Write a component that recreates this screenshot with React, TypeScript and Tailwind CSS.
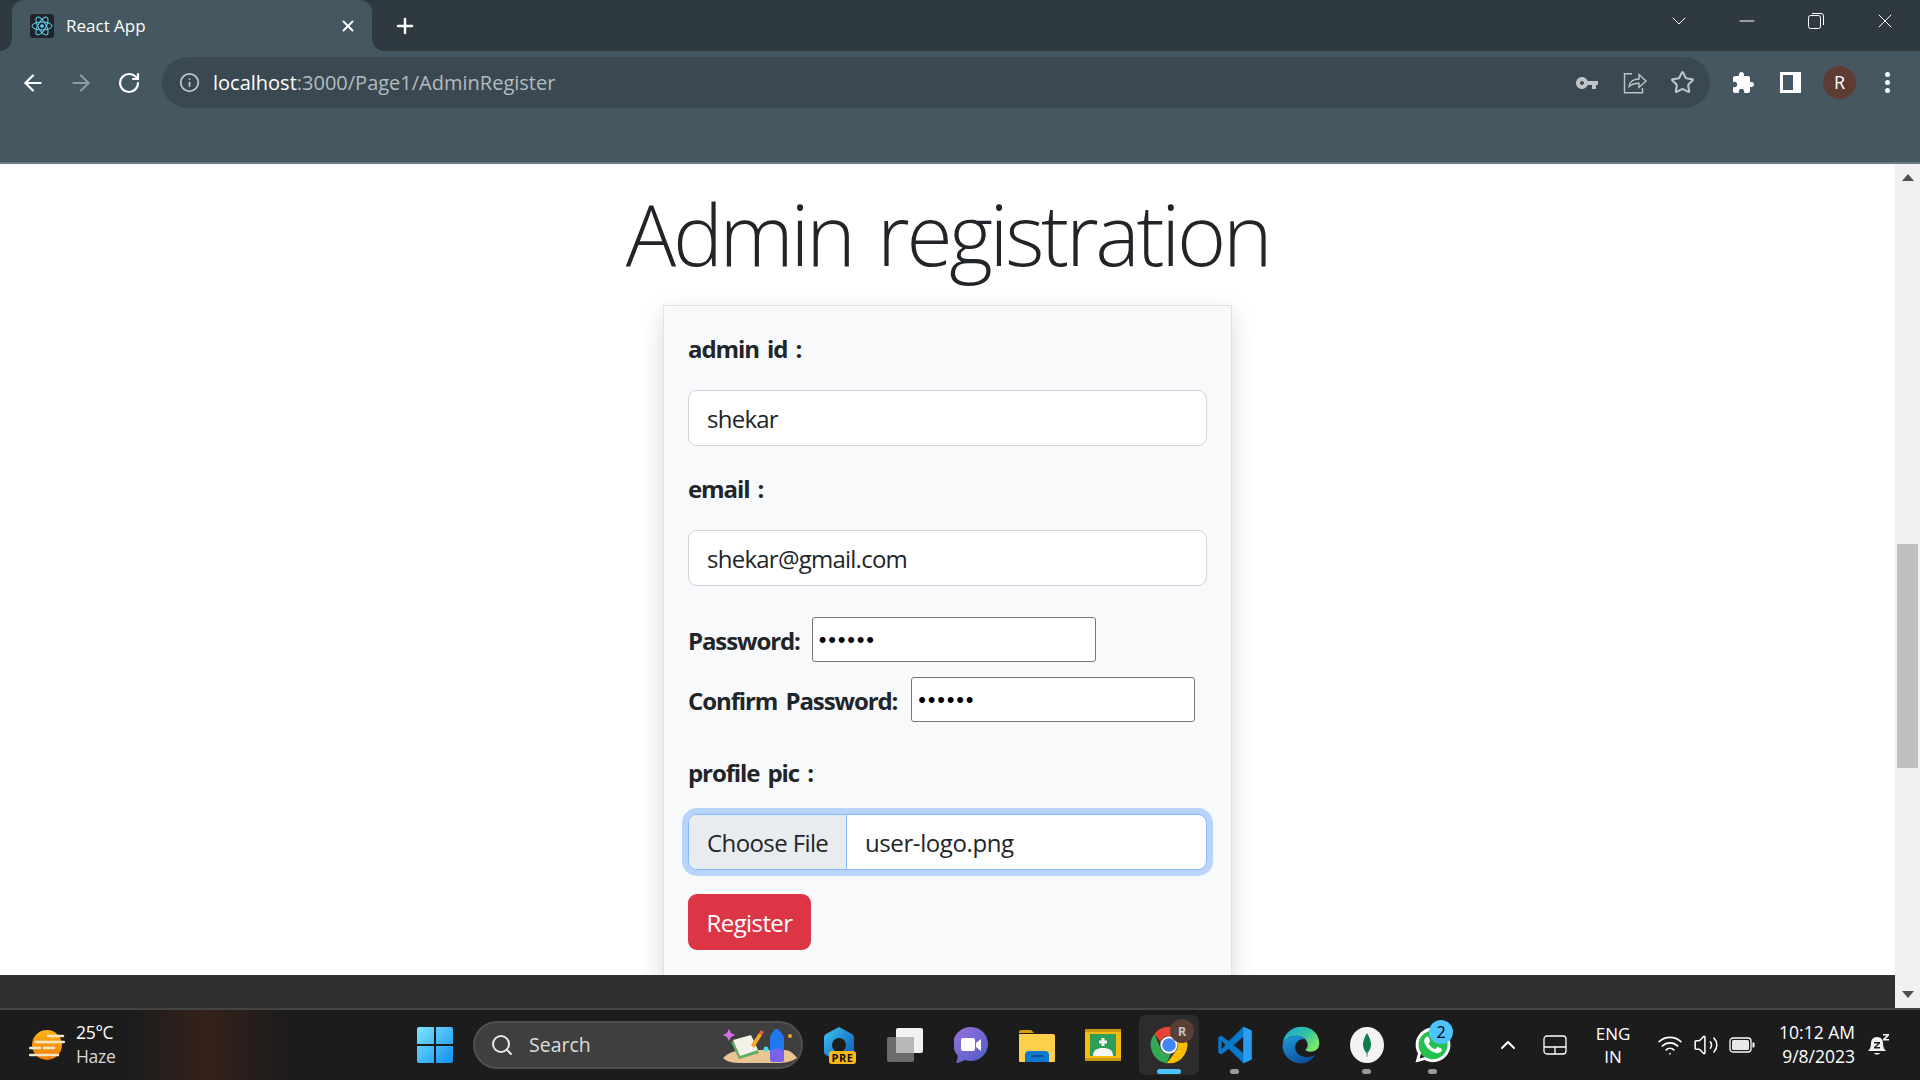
import React from "react";
import { ArrowLeft, ArrowRight, ChevronDown, ChevronUp, Info, Minus, Plus, RotateCw, Search, Star, Volume2, Wifi, X } from "lucide-react";
import { FaWhatsapp } from "react-icons/fa";

const ReactLogo = () => (
  <svg viewBox="0 0 24 24" className="w-6 h-6 rounded-[3px] bg-[#20232a]" fill="none" stroke="#61dafb" strokeWidth="1">
    <circle cx="12" cy="12" r="1.8" fill="#61dafb" stroke="none" />
    <ellipse cx="12" cy="12" rx="10" ry="4" />
    <ellipse cx="12" cy="12" rx="10" ry="4" transform="rotate(60 12 12)" />
    <ellipse cx="12" cy="12" rx="10" ry="4" transform="rotate(120 12 12)" />
  </svg>
);

const Tabs = () => (
  <div className="h-[51px] flex items-end bg-[#2e3a40] text-white">
    <div className="relative ml-3 w-[360px] h-[51px] rounded-t-[12px] bg-[#455761] flex items-center pl-[18px] pr-[15px]">
      <span className="absolute bottom-0 -left-3 w-3 h-3 bg-[radial-gradient(circle_at_0_0,transparent_11.5px,#455761_12px)]" />
      <span className="absolute bottom-0 -right-3 w-3 h-3 bg-[radial-gradient(circle_at_100%_0,transparent_11.5px,#455761_12px)]" />
      <ReactLogo />
      <span className="ml-3 text-[17px] flex-1">React App</span>
      <X size={18} strokeWidth={2.5} />
    </div>
    <div className="ml-[21px] h-[51px] flex items-center">
      <Plus size={24} strokeWidth={2.5} />
    </div>
    <div className="ml-auto h-[42px] self-start flex items-center">
      <ChevronDown size={24} strokeWidth={1} className="mr-[44px]" />
      <Minus size={24} strokeWidth={1} className="mr-[49px]" />
      <svg viewBox="0 0 16 16" className="w-4 h-4 mr-[49px]" fill="none" stroke="white" strokeWidth="1">
        <rect x="0.5" y="2.5" width="12" height="13" rx="2" />
        <path d="M4 0.5h9a2.5 2.5 0 0 1 2.5 2.5v9" />
      </svg>
      <X size={24} strokeWidth={1} className="mr-[23px]" />
    </div>
  </div>
);

const Toolbar = () => (
  <div className="h-[113px] bg-[#455761] border-b-2 border-[#6d7b84] flex items-start pt-[6px] text-white">
    <div className="w-[162px] h-[51px] flex items-center">
      <ArrowLeft size={26} strokeWidth={2} className="ml-5" />
      <ArrowRight size={26} strokeWidth={2} className="ml-[22px] text-[#8f9aa0]" />
      <RotateCw size={24} strokeWidth={2.2} className="ml-[23px]" />
    </div>
    <div className="w-[1548px] h-[51px] rounded-full bg-[#3a4851] flex items-center">
      <Info size={21} className="ml-[17px] text-[#c3c8cb]" />
      <span className="ml-[13px] text-[20px] text-[#b4bbbf]">
        <span className="text-white">localhost</span>:3000/Page1/AdminRegister
      </span>
      <svg viewBox="0 0 24 24" className="ml-auto w-6 h-6" fill="#c0c4c6">
        <path d="M12.65 10C11.83 7.67 9.61 6 7 6c-3.31 0-6 2.69-6 6s2.69 6 6 6c2.61 0 4.83-1.67 5.65-4H17v4h4v-4h2v-4H12.65zM7 14c-1.1 0-2-.9-2-2s.9-2 2-2 2 .9 2 2-.9 2-2 2z" />
      </svg>
      <svg viewBox="0 0 24 24" className="ml-6 w-6 h-6" fill="none" stroke="#c0c4c6" strokeWidth="1.4">
        <path d="M9 2.8H1.5v19h18V17" />
        <path d="M6 15.5c.5-5 5-7.5 10-7.5V3.5l7 6.5-7 6.5v-4.3c-4.5 0-7.5 1-10 3.3z" />
      </svg>
      <Star size={25} strokeWidth={2} className="ml-[23px] text-[#c0c4c6]" />
      <span className="w-[15px]" />
    </div>
    <div className="h-[51px] flex items-center">
      <svg viewBox="0 0 24 24" className="ml-[21px] w-6 h-6" fill="white">
        <path d="M20.5 11H19V7c0-1.1-.9-2-2-2h-4V3.5C13 2.12 11.88 1 10.5 1S8 2.12 8 3.5V5H4c-1.1 0-1.99.9-1.99 2v3.8H3.5c1.49 0 2.7 1.21 2.7 2.7s-1.21 2.7-2.7 2.7H2V20c0 1.1.9 2 2 2h3.8v-1.5c0-1.49 1.21-2.7 2.7-2.7 1.49 0 2.7 1.21 2.7 2.7V22H17c1.1 0 2-.9 2-2v-4h1.5c1.38 0 2.5-1.12 2.5-2.5S21.88 11 20.5 11z" />
      </svg>
      <div className="ml-[25px] w-[21px] h-[21px] bg-white flex items-center pl-[3px]">
        <div className="w-[10px] h-[15px] bg-[#455761]" />
      </div>
      <div className="ml-[22px] w-[33px] h-[33px] rounded-full bg-[#5e3c33] flex items-center justify-center text-[18px]">R</div>
      <div className="ml-[29px] flex flex-col gap-[3px]">
        <div className="w-[5px] h-[5px] rounded-full bg-white" />
        <div className="w-[5px] h-[5px] rounded-full bg-white" />
        <div className="w-[5px] h-[5px] rounded-full bg-white" />
      </div>
    </div>
  </div>
);

const labelText = "font-bold text-[24px] tracking-[-1.1px] [word-spacing:3px]";

const Field = ({ label, value }: { label: string; value: string }) => (
  <div>
    <label className={"block h-9 leading-[34px] " + labelText}>{label}</label>
    <input
      readOnly
      value={value}
      className="mt-[22px] mb-[26px] block w-full h-[56px] rounded-[9px] border border-[#ced4da] bg-white px-[18px] text-[24px] tracking-[-0.75px] text-[#212529]"
    />
  </div>
);

const PasswordRow = ({ label, className, gap }: { label: string; className: string; gap: string }) => (
  <div className={"flex items-center " + className}>
    <label className={"leading-9 pt-[2px] " + labelText}>{label}</label>
    <input
      readOnly
      type="password"
      value="shekar"
      className={gap + " w-[284px] h-[45px] rounded-[3px] border border-[#767676] bg-white px-[6px] text-[22px] tracking-[1.8px] text-black font-['Liberation_Sans',sans-serif]"}
    />
  </div>
);

const RegisterForm = () => (
  <div className="mx-auto w-[569px] border border-[#dee2e6] bg-[#f8f9fa] px-6 pt-[26px] pb-10 shadow-[0_8px_24px_rgba(0,0,0,0.15)] text-[#212529]">
    <Field label="admin id :" value="shekar" />
    <Field label="email :" value="shekar@gmail.com" />
    <PasswordRow label="Password:" className="mt-[31px]" gap="ml-3" />
    <PasswordRow label="Confirm Password:" className="mt-[15px]" gap="ml-[14px]" />
    <label className={"block mt-[34px] h-9 leading-[34px] " + labelText}>profile pic :</label>
    <div className="mt-[22px] h-[56px] rounded-[9px] border border-[#86b7fe] bg-white flex items-center overflow-visible shadow-[0_0_0_6px_#b9d4fb] text-[24px] tracking-[-0.6px]">
      <div className="w-[158px] h-full rounded-l-[8px] bg-[#e9ecef] border-r border-[#86b7fe] flex items-center pl-[18px] pt-[2px]">Choose File</div>
      <span className="ml-[18px] pt-[2px] tracking-[-0.4px]">user-logo.png</span>
    </div>
    <button className="block mt-6 w-[123px] h-[56px] rounded-[9px] bg-[#dc3545] pt-[2px] text-white text-[24px] tracking-[-0.6px]">Register</button>
  </div>
);

const Page = () => (
  <div className="w-[1895px]">
    <div className="h-[811px] bg-white overflow-hidden">
      <h1 className="mt-[19px] mb-[21px] h-[101px] text-center text-[84px] leading-[101px] font-light tracking-[-3.3px] [word-spacing:6px] text-[#212529]">
        Admin registration
      </h1>
      <RegisterForm />
    </div>
    <div className="h-[33px] bg-[#303030]" />
  </div>
);

const Scrollbar = () => (
  <div className="w-[25px] h-[844px] bg-[#f1f1f1] flex flex-col items-center">
    <svg viewBox="0 0 12 7" className="w-3 h-[7px] mt-[10px] shrink-0" fill="#505050"><path d="M6 0l6 7H0z" /></svg>
    <div className="mt-[363px] w-[21px] h-[224px] bg-[#bfbfbf]" />
    <svg viewBox="0 0 12 7" className="w-3 h-[7px] mt-auto mb-[10px] shrink-0" fill="#505050"><path d="M6 7L0 0h12z" /></svg>
  </div>
);

const Weather = () => (
  <svg viewBox="0 0 36 30" className="w-9 h-[30px]">
    <defs>
      <linearGradient id="sun" x1="0" y1="0" x2="0" y2="1">
        <stop offset="0" stopColor="#fcb415" />
        <stop offset="1" stopColor="#f07b0c" />
      </linearGradient>
    </defs>
    <ellipse cx="18" cy="15" rx="15" ry="15" fill="url(#sun)" />
    <g stroke="#f6e6c4" strokeWidth="2.5" strokeLinecap="round">
      <path d="M19 6h15M7 12h28M1 18h10M15 18h10M1 25h28" />
    </g>
  </svg>
);

const WinLogo = () => (
  <svg viewBox="0 0 36 36" className="w-9 h-9">
    <defs>
      <linearGradient id="win" x1="0" y1="0" x2="1" y2="1">
        <stop offset="0" stopColor="#7fe6ff" />
        <stop offset="1" stopColor="#0f8ff0" />
      </linearGradient>
    </defs>
    <path fill="url(#win)" d="M0 2a2 2 0 0 1 2-2h15v17H0zM19 0h15a2 2 0 0 1 2 2v15H19zM0 19h17v17H2a2 2 0 0 1-2-2zM19 19h17v15a2 2 0 0 1-2 2H19z" />
  </svg>
);

const SearchArt = () => (
  <svg viewBox="0 0 74 36" className="w-[74px] h-9">
    <path d="M0 31c6-6 14-8 22-8h40c5 0 9 4 12 8-6 4-12 5-20 5H18C10 36 4 35 0 31z" fill="#e8c592" />
    <path d="M6 0l2 4 4 2-4 2-2 4-2-4-4-2 4-2z" fill="#d76fe6" transform="translate(0 2)" />
    <path d="M8 15l20-5 8 16-20 6z" fill="#5fae5f" />
    <path d="M10 13l18-5 7 15-18 6z" fill="#f3f1e8" />
    <path d="M28 18l8-12 3 2-8 13z" fill="#f6a723" />
    <path d="M36 6l2-3 3 2-2 3z" fill="#ea5a3c" />
    <circle cx="43" cy="22" r="2.5" fill="#56d8e8" />
    <path d="M47 12c0-5 4-8 5-10h3c1 2 6 5 6 10v20c0 2-1 3-3 3H50c-2 0-3-1-3-3z" fill="#1f78f0" />
    <path d="M47 26c2-6 12-6 14 0v6c0 2-1 3-3 3H50c-2 0-3-1-3-3z" fill="#7a62ee" />
    <circle cx="67" cy="9" r="2" fill="#f0a81c" />
  </svg>
);

const PreIcon = () => (
  <div className="relative w-[34px] h-[36px]">
    <svg viewBox="0 0 34 36" className="w-[34px] h-[36px]">
      <defs>
        <linearGradient id="pre" x1="0" y1="0" x2="1" y2="1">
          <stop offset="0" stopColor="#3ec6f4" />
          <stop offset="1" stopColor="#0a4fae" />
        </linearGradient>
      </defs>
      <path fillRule="evenodd" fill="url(#pre)" d="M17 0l13 7a4 4 0 0 1 2 3.500v14a4 4 0 0 1-2 3.500l-13 7-13-7a4 4 0 0 1-2-3.500v-14a4 4 0 0 1 2-3.500zM17 11a7 7 0 1 0 0 14 7 7 0 0 0 0-14z" />
    </svg>
    <span className="absolute left-[7px] top-[24px] w-[27px] h-[13px] rounded-[3px] bg-[#fdb913] text-[#111] text-[11px] leading-[13px] font-bold text-center tracking-[0.6px]">PRE</span>
  </div>
);

const TaskView = () => (
  <svg viewBox="0 0 36 34" className="w-9 h-[34px]">
    <rect x="0" y="9" width="27" height="25" rx="2" fill="#6b6b6b" />
    <rect x="9" y="0" width="27" height="25" rx="2" fill="#f2f2f2" />
    <rect x="9" y="9" width="18" height="16" fill="#b8b8b8" />
  </svg>
);

const ChatIcon = () => (
  <svg viewBox="0 0 34 36" className="w-[34px] h-9">
    <defs>
      <linearGradient id="chat" x1="0" y1="0" x2="1" y2="1">
        <stop offset="0" stopColor="#9a72dc" />
        <stop offset="1" stopColor="#4a5cc8" />
      </linearGradient>
    </defs>
    <path fill="url(#chat)" d="M17 0a17 17 0 1 1-6 32.900c-3 1.600-6 2.800-9 3.100 1-2 1.700-5 1.700-7.500A17 17 0 0 1 17 0z" />
    <rect x="7" y="11" width="14" height="13" rx="2" fill="white" />
    <path d="M22 16l5-4v12l-5-4z" fill="white" />
  </svg>
);

const FolderIcon = () => (
  <svg viewBox="0 0 36 33" className="w-9 h-[33px]">
    <path d="M0 3a2 2 0 0 1 2-2h9c2 0 3 2 4 3h-15z" fill="#d99b08" />
    <path d="M0 5h34a2 2 0 0 1 2 2v25a1 1 0 0 1-1 1H1a1 1 0 0 1-1-1z" fill="#fdcf4d" />
    <path d="M6 33V26a4 4 0 0 1 4-4h16a4 4 0 0 1 4 4v7z" fill="#0d78cf" />
    <rect x="12" y="26" width="12" height="2" fill="#0a4f95" />
  </svg>
);

const ClassroomIcon = () => (
  <svg viewBox="0 0 36 32" className="w-9 h-8">
    <rect width="36" height="32" fill="#f5bb0f" />
    <rect y="0" width="36" height="3" fill="#c99a0c" />
    <rect x="5" y="5" width="26" height="22" fill="#2f9e5b" />
    <path d="M8 27c0-6 4-8 10-8s10 2 10 8z" fill="#f5f5f5" />
    <path d="M16.500 9h3v2.500H22v3h-2.500V17h-3v-2.500H14v-3h2.500z" fill="#f5f5f5" />
    <rect y="29" width="36" height="3" fill="#c99a0c" />
  </svg>
);

const ChromeIcon = () => (
  <svg viewBox="0 0 24 24" className="w-10 h-10">
    <path fill="#ea4335" d="M12 1a11 11 0 0 1 9.530 5.500H12a5.500 5.500 0 0 0-5.200 3.700L3.300 5.300A11 11 0 0 1 12 1z" />
    <path fill="#34a853" d="M3.300 5.300L7.200 14.700a5.500 5.500 0 0 0 6 2.600L10.600 22.900A11 11 0 0 1 3.300 5.300z" />
    <path fill="#fbbc04" d="M21.530 6.500H12a5.500 5.500 0 0 1 4.800 8.200L10.600 22.900A11 11 0 0 0 21.530 6.500z" />
    <circle cx="12" cy="12" r="5.200" fill="white" />
    <circle cx="12" cy="12" r="4.100" fill="#4285f4" />
  </svg>
);

const CodeIcon = () => (
  <svg viewBox="0 0 24 24" className="w-10 h-10">
    <path fillRule="evenodd" fill="#0a78c8" d="M17 1L8.200 9.700 3.800 6.300 2 7.300v9.400l1.800 1 4.400-3.400L17 23l5-2.300V3.300zM17 7.200L11.200 12l5.800 4.800zM4 9.500L6.300 12 4 14.500z" />
    <path fill="#2a9df0" d="M17 1l5 2.300v17.400L17 23z" />
  </svg>
);

const EdgeIcon = () => (
  <svg viewBox="0 0 24 24" className="w-10 h-10">
    <defs>
      <linearGradient id="edgeTop" x1="0" y1="0" x2="1" y2="0.600">
        <stop offset="0" stopColor="#19a4d8" />
        <stop offset="0.600" stopColor="#35c1a2" />
        <stop offset="1" stopColor="#7ae66a" />
      </linearGradient>
      <linearGradient id="edgeLow" x1="0" y1="0" x2="0.600" y2="1">
        <stop offset="0" stopColor="#1d9be0" />
        <stop offset="1" stopColor="#0c4f9c" />
      </linearGradient>
    </defs>
    <path fill="url(#edgeTop)" d="M1 11.500C1.500 5.500 6 1 12.500 1 18.500 1 23 5.500 23 11c0 3.500-2.500 5-5 5-1.500 0-3-.5-3.500-1 1-.8 1.500-1.700 1.500-3 0-3-3-5.500-6.500-5.500C5.500 6.500 2 8.500 1 11.500z" />
    <path fill="url(#edgeLow)" d="M1 11.500C2 8.500 5.500 6.500 9.500 6.500c2 0 4 1 5 2-3.500-.5-6 2-6 5 0 4 4.500 6.500 9 5.500 1.500-.3 3-1 3.500-1.500-2 3-5 5.500-9 5.500C6 23 .5 18 1 11.500z" />
  </svg>
);

const MongoIcon = () => (
  <svg viewBox="0 0 34 36" className="w-[34px] h-9">
    <ellipse cx="17" cy="18" rx="17" ry="18" fill="#f3f3f3" />
    <path d="M17 6c2.500 4 4 8 4 11.500 0 4-2 7-3.500 8.500l-.2 4h-.6l-.2-4C15 24.500 13 21.500 13 17.500 13 14 14.500 10 17 6z" fill="#0f7c4e" />
  </svg>
);

const WhatsAppIcon = () => (
  <div className="relative w-9 h-9">
    <div className="absolute left-[3px] top-[3px] w-[30px] h-[30px] rounded-full bg-[#25c04f]" />
    <FaWhatsapp size={40} color="white" className="absolute -left-0.5 -top-0.5" />
  </div>
);

const pinned = [
  { icon: <PreIcon /> },
  { icon: <TaskView /> },
  { icon: <ChatIcon /> },
  { icon: <FolderIcon /> },
  { icon: <ClassroomIcon /> },
  { icon: <ChromeIcon />, active: true },
  { icon: <CodeIcon />, running: true },
  { icon: <EdgeIcon /> },
  { icon: <MongoIcon />, running: true },
  { icon: <WhatsAppIcon />, running: true, badge: "2" },
];

const Taskbar = () => (
  <div className="h-[72px] border-t-2 border-[#444444] bg-[linear-gradient(90deg,#1c1c1c_130px,#35211a_205px,#1c1c1c_290px)] flex items-center text-white text-[17.5px]">
    <div className="ml-[29px]"><Weather /></div>
    <div className="ml-[11px] w-[40px] leading-6 tracking-[-0.3px] pb-[3px]">
      <div>25°C</div>
      <div className="text-[#d8d8d8]">Haze</div>
    </div>
    <div className="ml-[301px]"><WinLogo /></div>
    <div className="ml-5 w-[330px] h-12 rounded-full bg-[#3f3f3f] border-2 border-[#4f4f4f] flex items-center pl-[15px] pr-[4px]">
      <Search size={24} strokeWidth={2} className="text-[#e8e8e8]" />
      <span className="ml-[15px] text-[19.5px] text-[#dddddd]">Search</span>
      <div className="ml-auto"><SearchArt /></div>
    </div>
    <div className="ml-[6px] flex gap-[6px]">
      {pinned.map((p, i) => (
        <div key={i} className={"relative w-[60px] h-[60px] rounded-[6px] flex items-center justify-center " + (p.active ? "bg-[#2c2c2c]" : "")}>
          {p.icon}
          {p.active && (
            <>
              <span className="absolute left-[31px] top-[4px] w-6 h-6 rounded-full bg-[#5a3f37] text-[#c9c1bd] text-[13px] font-bold leading-6 text-center">R</span>
              <span className="absolute left-[18px] bottom-[1px] w-6 h-[5px] rounded-full bg-[#4cc2ff]" />
            </>
          )}
          {p.running && <span className="absolute left-[25px] bottom-[1px] w-[9px] h-[5px] rounded-full bg-[#9a9a9a]" />}
          {p.badge && <span className="absolute left-[26px] top-[5px] w-6 h-6 rounded-full bg-[#4cc2ff] text-black text-[16px] leading-6 text-center">{p.badge}</span>}
        </div>
      ))}
    </div>
    <ChevronUp size={24} strokeWidth={2} className="ml-[33px]" />
    <svg viewBox="0 0 24 20" className="ml-[23px] w-6 h-5" fill="none" stroke="white" strokeWidth="1.300">
      <rect x="1" y="1" width="22" height="18" rx="3" />
      <path d="M1 12h22M12 12v7" />
    </svg>
    <div className="ml-[26px] w-10 text-center leading-[23px] text-[17px]">
      <div>ENG</div>
      <div>IN</div>
    </div>
    <Wifi size={26} strokeWidth={1.6} className="ml-6" />
    <Volume2 size={26} strokeWidth={1.4} className="ml-[10px]" />
    <svg viewBox="0 0 26 16" className="ml-[10px] w-[26px] h-4" fill="none">
      <rect x="1" y="1" width="21" height="14" rx="3" stroke="white" strokeWidth="1.300" />
      <rect x="3" y="3" width="17" height="10" rx="1.500" fill="#e8e8e8" />
      <path d="M23.500 5.500h1a1 1 0 0 1 1 1v3a1 1 0 0 1-1 1h-1z" fill="white" />
    </svg>
    <div className="ml-[10px] w-[90px] text-right leading-6 pb-[3px]">
      <div>10:12 AM</div>
      <div>9/8/2023</div>
    </div>
    <svg viewBox="0 0 24 24" className="ml-[11px] w-6 h-6" fill="#f2f2f2">
      <path d="M11 4c-4 0-6 3-6 6 0 4-1 6-3 8h18c-2-2-3-4-3-8 0-3-2-6-6-6zM8 20c1 2 5 2 6 0z" />
      <path d="M17 1h6v1.500l-3.500 3.500H23V7.500h-6V6l3.500-3.500H17z" />
      <path d="M8 9h6v1.500l-4 3.500h4v1.500H8V14l4-3.500H8z" fill="#1c1c1c" />
    </svg>
  </div>
);

export default function App() {
  return (
    <div className="w-[1920px] h-[1080px] overflow-hidden flex flex-col font-['Open_Sans',sans-serif] bg-white">
      <Tabs />
      <Toolbar />
      <div className="flex">
        <Page />
        <Scrollbar />
      </div>
      <Taskbar />
    </div>
  );
}
